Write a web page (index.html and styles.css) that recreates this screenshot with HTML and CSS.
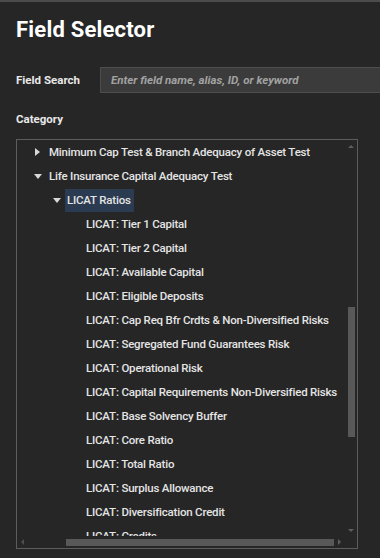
FILE: index.html
```html
<!DOCTYPE html>
<html lang="en">
<head>
    <meta charset="UTF-8">
    <meta name="viewport" content="width=device-width, initial-scale=1.0">
    <title>Field Selector</title>
    <link rel="stylesheet" href="styles.css">
</head>
<body>
    <div class="panel">
        <h1>Field Selector</h1>

        <div class="search-row">
            <label for="fieldSearch">Field Search</label>
            <input type="text" id="fieldSearch" placeholder="Enter field name, alias, ID, or keyword">
        </div>

        <div class="section-label">Category</div>

        <div class="tree-box">
            <div class="tree">
                <div class="node lvl0"><span class="caret closed"></span><span class="name">Minimum Cap Test &amp; Branch Adequacy of Asset Test</span></div>
                <div class="node lvl0"><span class="caret open"></span><span class="name">Life Insurance Capital Adequacy Test</span></div>
                <div class="node lvl1"><span class="caret open"></span><span class="name selected">LICAT Ratios</span></div>
                <div class="node lvl2"><span class="name">LICAT: Tier 1 Capital</span></div>
                <div class="node lvl2"><span class="name">LICAT: Tier 2 Capital</span></div>
                <div class="node lvl2"><span class="name">LICAT: Available Capital</span></div>
                <div class="node lvl2"><span class="name">LICAT: Eligible Deposits</span></div>
                <div class="node lvl2"><span class="name">LICAT: Cap Req Bfr Crdts &amp; Non-Diversified Risks</span></div>
                <div class="node lvl2"><span class="name">LICAT: Segregated Fund Guarantees Risk</span></div>
                <div class="node lvl2"><span class="name">LICAT: Operational Risk</span></div>
                <div class="node lvl2"><span class="name">LICAT: Capital Requirements Non-Diversified Risks</span></div>
                <div class="node lvl2"><span class="name">LICAT: Base Solvency Buffer</span></div>
                <div class="node lvl2"><span class="name">LICAT: Core Ratio</span></div>
                <div class="node lvl2"><span class="name">LICAT: Total Ratio</span></div>
                <div class="node lvl2"><span class="name">LICAT: Surplus Allowance</span></div>
                <div class="node lvl2"><span class="name">LICAT: Diversification Credit</span></div>
                <div class="node lvl2"><span class="name">LICAT: Credits</span></div>
            </div>

            <!-- vertical scrollbar -->
            <div class="vscroll">
                <span class="arrow up"></span>
                <div class="vtrack"><div class="vthumb"></div></div>
                <span class="arrow down"></span>
            </div>

            <!-- horizontal scrollbar -->
            <div class="hscroll">
                <span class="arrow left"></span>
                <div class="htrack"><div class="hthumb"></div></div>
                <span class="arrow right"></span>
            </div>
            <div class="corner"></div>
        </div>
    </div>
</body>
</html>
```

FILE: styles.css
```css
body {
    margin: 0;
    padding: 0;
    background-color: #262626;
    color: #e6e6e6;
    font-family: Roboto, "Liberation Sans", Arial, sans-serif;
    border-top: 2px solid #4b4b4b;
    overflow: hidden;
}
.panel {
    padding: 0 0 0 16px;
    height: 556px;
    box-sizing: border-box;
}
h1 {
    margin: 0;
    padding-top: 15px;
    height: 49px;
    box-sizing: border-box;
    font-size: 22px;
    font-weight: 700;
    color: #ffffff;
    letter-spacing: 0.2px;
}
.search-row {
    display: flex;
    align-items: center;
    margin-top: 16px;
    height: 26px;
}
.search-row label {
    width: 84px;
    font-size: 11.5px;
    font-weight: 700;
    color: #e8e8e8;
}
.search-row input {
    flex: 1;
    height: 26px;
    box-sizing: border-box;
    margin: 0;
    padding: 0 10px;
    background-color: #3b3b3b;
    border: 1px solid #4d4d4d;
    border-right: none;
    color: #eee;
    font-family: Roboto, "Liberation Sans", Arial, sans-serif;
    font-size: 11.5px;
    font-style: italic;
    outline: none;
}
.search-row input::placeholder {
    color: #a2a2a2;
    font-weight: 700;
}
.section-label {
    margin-top: 19px;
    height: 27px;
    font-size: 11.5px;
    font-weight: 700;
    color: #e8e8e8;
}
.tree-box {
    width: 342px;
    height: 410px;
    box-sizing: border-box;
    border: 1px solid #5c5c5c;
    display: grid;
    grid-template-columns: 328px 12px;
    grid-template-rows: 396px 12px;
    overflow: hidden;
}
.tree {
    overflow: hidden;
    font-size: 11.5px;
    font-weight: 500;
    letter-spacing: -0.2px;
    color: #e4e4e4;
}
.node {
    height: 24px;
    display: flex;
    align-items: center;
    white-space: nowrap;
}
.lvl0 { padding-left: 17px; }
.lvl1 { padding-left: 36px; }
.lvl2 { padding-left: 69px; }
.caret {
    width: 15px;
    display: flex;
    align-items: center;
}
.caret.closed::before {
    content: "";
    border-left: 5px solid #d8d8d8;
    border-top: 4px solid transparent;
    border-bottom: 4px solid transparent;
    margin-left: 1px;
}
.caret.open::before {
    content: "";
    border-top: 5px solid #d8d8d8;
    border-left: 4px solid transparent;
    border-right: 4px solid transparent;
}
.lvl1 .caret { width: 14px; }
.name {
    line-height: 23px;
}
.name.selected {
    background-color: #2b3b51;
    padding: 0 3px 0 2px;
    margin-left: -2px;
}
.vscroll {
    display: flex;
    flex-direction: column;
    align-items: center;
}
.vtrack {
    flex: 1;
    width: 100%;
    display: flex;
    justify-content: flex-end;
    padding-right: 2px;
    box-sizing: border-box;
}
.vthumb {
    width: 7px;
    height: 130px;
    margin-top: 155px;
    background-color: #585858;
}
.hscroll {
    display: flex;
    align-items: center;
}
.htrack {
    flex: 1;
    height: 100%;
    display: flex;
    align-items: center;
}
.hthumb {
    height: 7px;
    width: 268px;
    margin-left: 38px;
    background-color: #585858;
}
.arrow {
    width: 12px;
    height: 12px;
    display: flex;
    align-items: center;
    justify-content: center;
}
.arrow::before {
    content: "";
    width: 0;
    height: 0;
}
.arrow.up::before {
    border-bottom: 3px solid #5e5e5e;
    border-left: 3px solid transparent;
    border-right: 3px solid transparent;
}
.arrow.down::before {
    border-top: 3px solid #5e5e5e;
    border-left: 3px solid transparent;
    border-right: 3px solid transparent;
}
.arrow.left::before {
    border-right: 3px solid #4f4f4f;
    border-top: 3px solid transparent;
    border-bottom: 3px solid transparent;
}
.arrow.right::before {
    border-left: 3px solid #5e5e5e;
    border-top: 3px solid transparent;
    border-bottom: 3px solid transparent;
}
```
